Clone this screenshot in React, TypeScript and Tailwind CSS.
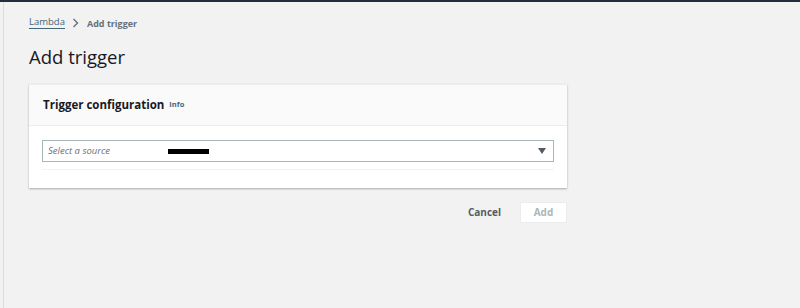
export default function App() {
  return (
    <div className="w-[800px] h-[308px] bg-[#f2f2f2] border-t-[2px] border-[#232f3e] overflow-hidden" style={{ fontFamily: '"Open Sans", "Noto Sans", sans-serif' }}>
      <div className="h-full ml-[3px] border-l border-[#dcdcdc] pl-[25px] pt-[14px]">
        <div className="flex items-center h-[14px] leading-none">
          <span className="text-[9.5px] text-[#44657a] border-b border-[#44657a] pb-[1px]">Lambda</span>
          <svg className="ml-[7px] mr-[8px]" width="7" height="10" viewBox="0 0 7 10"><path d="M1.5 1 L5.5 5 L1.5 9" fill="none" stroke="#687078" strokeWidth="1.4" /></svg>
          <span className="text-[9px] text-[#687078] font-bold">Add trigger</span>
        </div>
        <h1 className="mt-[15px] text-[18.5px] leading-[24px] text-[#16191f]">Add trigger</h1>
        <div className="mt-[15px] w-[538px] bg-white shadow-[0_1px_2px_rgba(0,0,0,0.3)] border-t border-[#eaeded]">
          <div className="h-[41px] bg-[#fafafa] border-b border-[#eaeded] flex items-center pl-[14px]">
            <span className="text-[11.5px] font-bold text-[#16191f]">Trigger configuration</span>
            <span className="ml-[5px] text-[7.5px] font-bold text-[#44657a]">Info</span>
          </div>
          <div className="px-[13px] pt-[14px]">
            <div className="h-[22px] border border-[#aab7b8] flex items-center pl-[5px] pr-[7px]">
              <span className="italic text-[9.5px] text-[#687078] w-[120px]">Select a source</span>
              <span className="w-[41px] h-[5px] bg-black" />
              <span className="flex-1" />
              <svg width="8" height="6" viewBox="0 0 8 6"><path d="M0 0 H8 L4 6 Z" fill="#545b64" /></svg>
            </div>
            <div className="mt-[7px] border-t border-[#f2f3f3] h-[19px]" />
          </div>
        </div>
        <div className="w-[538px] flex justify-end items-center mt-[14px]">
          <span className="text-[10px] font-bold text-[#545b64] mr-[19px]">Cancel</span>
          <div className="w-[47px] h-[21px] bg-white border border-[#eaeded] flex items-center justify-center text-[10px] font-bold text-[#aab7b8]">Add</div>
        </div>
      </div>
    </div>
  );
}
